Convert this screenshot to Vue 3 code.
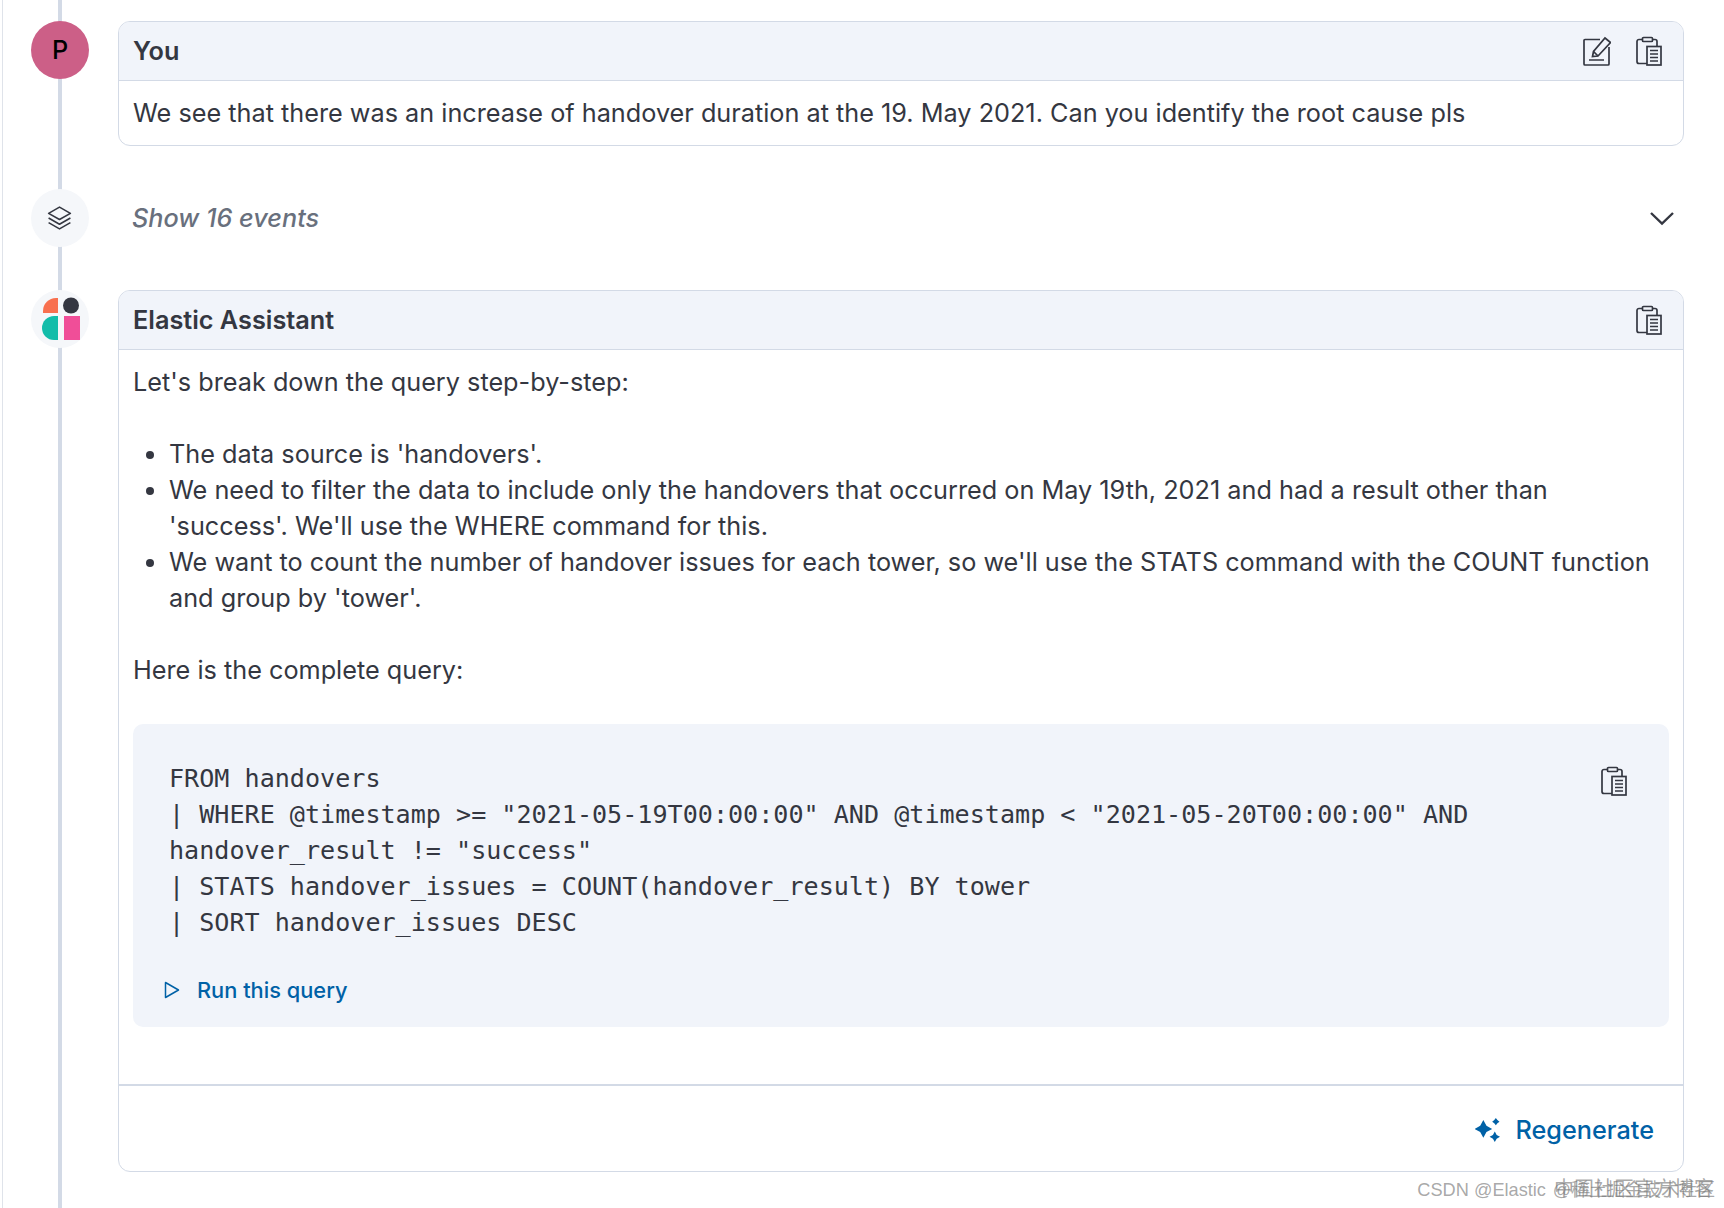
<template>
  <div class="page">
    <div class="timeline">
      <div class="row">
        <div class="avatar user">P</div>
        <section class="card">
          <header class="card-head">
            <span class="name">You</span>
            <span class="actions">
              <svg class="icon edit" viewBox="0 0 28 30" fill="none" stroke="#343741" stroke-width="1.700">
                <path d="M17 3.500H2a1 1 0 0 0-1 1V28a1 1 0 0 0 1 1h23a1 1 0 0 0 1-1V11" />
                <path d="M6 24h15" />
                <path d="M9.500 20.500l1-5L22 2l5.500 4.500L15 20z" />
                <path d="M10.500 15.500L15 20" />
              </svg>
              <svg class="icon" viewBox="0 0 26 30" fill="none" stroke="#343741" stroke-width="1.700">
                <use href="#clip" />
              </svg>
            </span>
          </header>
          <div class="card-body short">
            We see that there was an increase of handover duration at the 19. May 2021. Can you identify the root cause pls
          </div>
        </section>
      </div>

      <div class="row events">
        <div class="avatar pale">
          <svg class="layers" width="27" height="27" viewBox="0 0 26 26" fill="none" stroke="#343741" stroke-width="1.500" stroke-linejoin="round">
            <path d="M13 2l10.500 6L13 14 2.500 8z" />
            <path d="M2.500 12.500L13 18.500l10.500-6" />
            <path d="M2.500 17L13 23l10.500-6" />
          </svg>
        </div>
        <div class="events-bar">
          <em>Show {{ eventCount }} events</em>
          <svg width="26" height="16" viewBox="0 0 26 16" fill="none" stroke="#343741" stroke-width="2.400">
            <path d="M2 3l11 10.500L24 3" />
          </svg>
        </div>
      </div>

      <div class="row">
        <div class="avatar pale">
          <svg class="logo" width="38" height="44" viewBox="0 0 38 44">
            <path d="M1 16V14A13 13 0 0 1 14 1h2v15z" fill="#f8704f" />
            <circle cx="29" cy="8.500" r="8" fill="#343741" />
            <path d="M16 19v24H12A12 12 0 0 1 0 31A12 12 0 0 1 12 19z" fill="#13bdaa" />
            <rect x="22" y="19" width="16" height="24" fill="#f04e98" />
          </svg>
        </div>
        <section class="card">
          <header class="card-head">
            <span class="name">Elastic Assistant</span>
            <span class="actions">
              <svg class="icon" viewBox="0 0 26 30" fill="none" stroke="#343741" stroke-width="1.700">
                <use href="#clip" />
              </svg>
            </span>
          </header>
          <div class="card-body">
            <p>Let's break down the query step-by-step:</p>
            <ul>
              <li v-for="item in steps" :key="item">{{ item }}</li>
            </ul>
            <p>Here is the complete query:</p>
            <div class="code-block">
              <svg class="icon code-copy" viewBox="0 0 26 30" fill="none" stroke="#343741" stroke-width="1.700">
                <use href="#clip" />
              </svg>
              <pre class="code">{{ query }}</pre>
              <a class="run">
                <svg width="16" height="18" viewBox="0 0 16 18" fill="none" stroke="#0061a6" stroke-width="1.500" stroke-linejoin="round">
                  <path d="M1.500 1.500v15l13-7.500z" />
                </svg>
                Run this query
              </a>
            </div>
          </div>
          <footer class="card-foot">
            <a class="regen">
              <svg width="25" height="25" viewBox="0 0 24 24" fill="#0061a6">
                <path d="M8 2L11 7.500 16.500 10.500 11 13.500 8 19 5 13.500 -0.500 10.500 5 7.500z" />
                <path d="M20 0l1.500 2 2 1.500-2 1.500L20 7l-1.500-2-2-1.500 2-1.500z" />
                <path d="M19 13l1.800 3.200L24 18l-3.200 1.800L19 23l-1.800-3.200L14 18l3.200-1.800z" />
              </svg>
              Regenerate
            </a>
          </footer>
        </section>
      </div>
    </div>

    <svg class="defs" width="0" height="0">
      <defs>
        <g id="clip">
          <path d="M6.500 3.500H3a2 2 0 0 0-2 2V25.500a2 2 0 0 0 2 2h8" />
          <path d="M21 10V5.500a2 2 0 0 0-2-2h-2.500" />
          <rect x="6.500" y="1.500" width="10" height="4" rx="1" />
          <rect x="11" y="10.500" width="14" height="18.500" />
          <path d="M14 14.500h8M14 18h8M14 21.500h8M14 25h8" />
        </g>
      </defs>
    </svg>

    <div class="watermark"><span>CSDN @Elastic </span><span class="cjk">中国社区官方博客</span><span class="ghost">@稀土掘金技术社区</span></div>
  </div>
</template>

<script setup>
const eventCount = 16;

const steps = [
  "The data source is 'handovers'.",
  "We need to filter the data to include only the handovers that occurred on May 19th, 2021 and had a result other than 'success'. We'll use the WHERE command for this.",
  "We want to count the number of handover issues for each tower, so we'll use the STATS command with the COUNT function and group by 'tower'.",
];

const query = `FROM handovers
| WHERE @timestamp >= "2021-05-19T00:00:00" AND @timestamp < "2021-05-20T00:00:00" AND
handover_result != "success"
| STATS handover_issues = COUNT(handover_result) BY tower
| SORT handover_issues DESC`;
</script>

<style>
html,
body {
  margin: 0;
  background: #fff;
}
</style>

<style scoped>
.page {
  position: relative;
  height: 1208px;
  overflow: hidden;
  box-sizing: border-box;
  padding: 21px 40px 0 31px;
  font-family: Inter, "Noto Sans CJK SC", sans-serif;
  font-size: 25.250px;
  line-height: 36px;
  color: #343741;
}
.page::before {
  content: "";
  position: absolute;
  left: 2px;
  top: 0;
  bottom: 0;
  width: 1px;
  background: #dfe3ea;
}
.timeline {
  position: relative;
}
.timeline::before {
  content: "";
  position: absolute;
  left: 27px;
  top: -21px;
  height: 1208px;
  width: 4px;
  background: #d3dae6;
}
.row {
  position: relative;
  display: flex;
  gap: 29px;
  align-items: flex-start;
}
.avatar {
  flex: none;
  width: 58px;
  height: 58px;
  border-radius: 50%;
  display: flex;
  align-items: center;
  justify-content: center;
}
.user {
  background: #cc5f87;
  color: #000;
  font-weight: 500;
}
.pale {
  background: #f5f7fa;
}
.logo {
  margin-left: 2px;
}
.layers {
  margin-left: -1px;
}
.card {
  flex: 1;
  min-width: 0;
  border: 1px solid #d3dae6;
  border-radius: 12px;
  background: #fff;
  overflow: hidden;
}
.card-head {
  height: 59px;
  box-sizing: border-box;
  display: flex;
  align-items: center;
  justify-content: space-between;
  padding: 0 21px 1px 14px;
  background: #f1f4fa;
  border-bottom: 1px solid #d3dae6;
}
.name {
  font-weight: 600;
  color: #343741;
}
.actions {
  display: flex;
  gap: 25px;
}
.icon {
  width: 26px;
  height: 30px;
  display: block;
}
.icon.edit {
  width: 28px;
}
.card-body {
  padding: 14px 14px 0 14px;
}
.card-body.short {
  height: 64px;
  box-sizing: border-box;
  padding: 14px 14px 0;
}
.card-body p {
  margin: 0;
}
.card-body ul {
  margin: 36px 0;
  padding-left: 36px;
}
.events {
  margin: 43px 0 43px;
  gap: 29px;
}
.events-bar {
  flex: 1;
  height: 58px;
  display: flex;
  align-items: center;
  justify-content: space-between;
  padding: 0 9px 0 14px;
  color: #69707d;
}
.events-bar em {
  font-weight: 500;
}
.code-block {
  position: relative;
  margin-top: 36px;
  padding: 37px 36px 0;
  height: 303px;
  box-sizing: border-box;
  background: #f1f4fa;
  border-radius: 10px;
}
.code {
  margin: 0;
  font-family: "DejaVu Sans Mono", monospace;
  font-size: 25.100px;
  line-height: 36px;
  color: #343741;
  white-space: pre-wrap;
}
.code-copy {
  position: absolute;
  right: 42px;
  top: 42px;
}
.run {
  display: flex;
  align-items: center;
  gap: 17px;
  margin-top: 31px;
  margin-left: -5px;
  font-size: 21.800px;
  font-weight: 500;
  color: #0061a6;
}
.card-foot {
  margin-top: 57px;
  height: 87px;
  box-sizing: border-box;
  padding: 3px 29px 0;
  border-top: 2px solid #d3dae6;
  display: flex;
  align-items: center;
  justify-content: flex-end;
}
.regen {
  display: flex;
  align-items: center;
  gap: 15px;
  font-weight: 500;
  color: #0061a6;
}
.defs {
  position: absolute;
}
.watermark {
  position: absolute;
  right: 10px;
  top: 1176px;
  font-family: "Liberation Sans", "Noto Sans CJK SC", sans-serif;
  font-size: 18.200px;
  line-height: 26px;
  color: rgba(120, 120, 120, 0.65);
  white-space: nowrap;
}
.cjk {
  margin-left: 3px;
  font-size: 20px;
}
.ghost {
  position: absolute;
  right: -1px;
  top: 1px;
  font-size: 18px;
}
</style>
